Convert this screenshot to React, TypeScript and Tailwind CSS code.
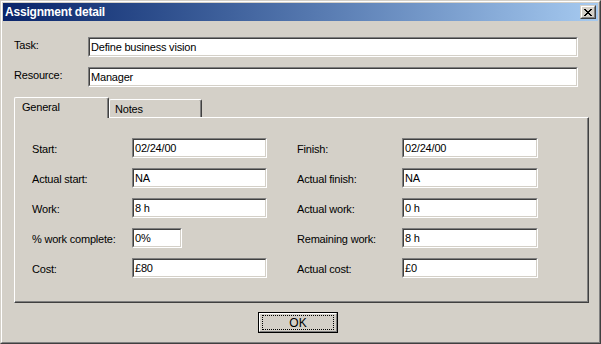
import React from "react";

const Field = ({ value, w }: { value: string; w: string }) => (
  <div className={`${w} h-[20px] shrink-0 border border-t-[#808080] border-l-[#808080] border-r-white border-b-white`}>
    <div className="h-full border border-t-[#404040] border-l-[#404040] border-r-[#d4d0c8] border-b-[#d4d0c8] bg-white pl-[1px] flex items-center leading-none whitespace-nowrap">
      {value}
    </div>
  </div>
);

const CloseGlyph = () => (
  <svg width="8" height="7" viewBox="0 0 8 7" shapeRendering="crispEdges">
    <rect x="0" y="0" width="2" height="1" fill="#000" />
    <rect x="6" y="0" width="2" height="1" fill="#000" />
    <rect x="1" y="1" width="2" height="1" fill="#000" />
    <rect x="5" y="1" width="2" height="1" fill="#000" />
    <rect x="2" y="2" width="4" height="1" fill="#000" />
    <rect x="3" y="3" width="2" height="1" fill="#000" />
    <rect x="2" y="4" width="4" height="1" fill="#000" />
    <rect x="1" y="5" width="2" height="1" fill="#000" />
    <rect x="5" y="5" width="2" height="1" fill="#000" />
    <rect x="0" y="6" width="2" height="1" fill="#000" />
    <rect x="6" y="6" width="2" height="1" fill="#000" />
  </svg>
);

const Row = ({
  l1,
  v1,
  w1,
  l2,
  v2,
}: {
  l1: string;
  v1: string;
  w1: string;
  l2: string;
  v2: string;
}) => (
  <div className="flex items-center h-[20px]">
    <div className="w-[100px] shrink-0 leading-none mt-[3px] whitespace-nowrap">{l1}</div>
    <div className="w-[135px] shrink-0">
      <Field value={v1} w={w1} />
    </div>
    <div className="w-[105px] ml-[30px] shrink-0 leading-none mt-[3px] whitespace-nowrap">{l2}</div>
    <Field value={v2} w="w-[136px]" />
  </div>
);

export default function App() {
  return (
    <div className="w-[601px] h-[344px] bg-[#d4d0c8] border border-t-[#d4d0c8] border-l-[#d4d0c8] border-r-[#404040] border-b-[#404040] font-['Liberation_Sans',Arial,sans-serif] text-[11px] tracking-[-0.2px] text-black select-none">
      <div className="h-full border border-t-white border-l-white border-r-[#808080] border-b-[#808080] p-px flex flex-col">
        {/* Title bar */}
        <div className="h-[18px] shrink-0 flex items-center justify-between pl-[2px] pr-[2px] bg-gradient-to-r from-[#0a246a] to-[#a6caf0]">
          <span className="text-white font-bold text-[12px] leading-none">Assignment detail</span>
          <div className="w-[16px] h-[14px] border border-t-[#d4d0c8] border-l-[#d4d0c8] border-r-[#404040] border-b-[#404040]">
            <div className="w-full h-full bg-[#d4d0c8] border border-t-white border-l-white border-r-[#808080] border-b-[#808080] flex items-center justify-center">
              <CloseGlyph />
            </div>
          </div>
        </div>

        {/* Body */}
        <div className="flex-1 flex flex-col pl-[11px] pt-[16px]">
          <div className="flex items-center h-[20px]">
            <div className="w-[74px] shrink-0 leading-none mb-[4px]">Task:</div>
            <Field value="Define business vision" w="w-[490px]" />
          </div>
          <div className="flex items-center h-[20px] mt-[10px]">
            <div className="w-[74px] shrink-0 leading-none mb-[4px]">Resource:</div>
            <Field value="Manager" w="w-[490px]" />
          </div>

          {/* Tabs */}
          <div className="flex items-end h-[20px] mt-[10px]">
            <div className="relative z-10 -mb-px w-[95px] h-[21px] bg-[#d4d0c8] border-l border-t border-l-white border-t-white border-r border-r-[#404040] rounded-t-[2px] shadow-[inset_-1px_0_0_#808080] flex items-start pt-[4px] pl-[7px] leading-none">
              General
            </div>
            <div className="w-[93px] h-[18px] bg-[#d4d0c8] border-l border-t border-l-white border-t-white border-r border-r-[#404040] rounded-t-[2px] shadow-[inset_-1px_0_0_#808080] flex items-start pt-[4px] pl-[5px] leading-none">
              Notes
            </div>
          </div>

          {/* Panel */}
          <div className="w-[575px] h-[186px] border border-t-white border-l-white border-r-[#404040] border-b-[#404040] shadow-[inset_-1px_-1px_0_#808080] pt-[20px] pl-[17px] flex flex-col gap-[10px]">
            <Row l1="Start:" v1="02/24/00" w1="w-[135px]" l2="Finish:" v2="02/24/00" />
            <Row l1="Actual start:" v1="NA" w1="w-[135px]" l2="Actual finish:" v2="NA" />
            <Row l1="Work:" v1="8 h" w1="w-[135px]" l2="Actual work:" v2="0 h" />
            <Row l1="% work complete:" v1="0%" w1="w-[50px]" l2="Remaining work:" v2="8 h" />
            <Row l1="Cost:" v1="£80" w1="w-[135px]" l2="Actual cost:" v2="£0" />
          </div>

          {/* OK button */}
          <div className="mt-[9px] ml-[244px]">
            <div className="w-[80px] h-[21px] border border-black">
              <div className="w-full h-full bg-[#d4d0c8] border border-t-white border-l-white border-r-[#808080] border-b-[#808080] px-[2px] py-[1px] flex">
                <div className="flex-1 border border-dotted border-black flex items-center justify-center leading-none tracking-normal text-[12px]">
                  OK
                </div>
              </div>
            </div>
          </div>
        </div>
      </div>
    </div>
  );
}
